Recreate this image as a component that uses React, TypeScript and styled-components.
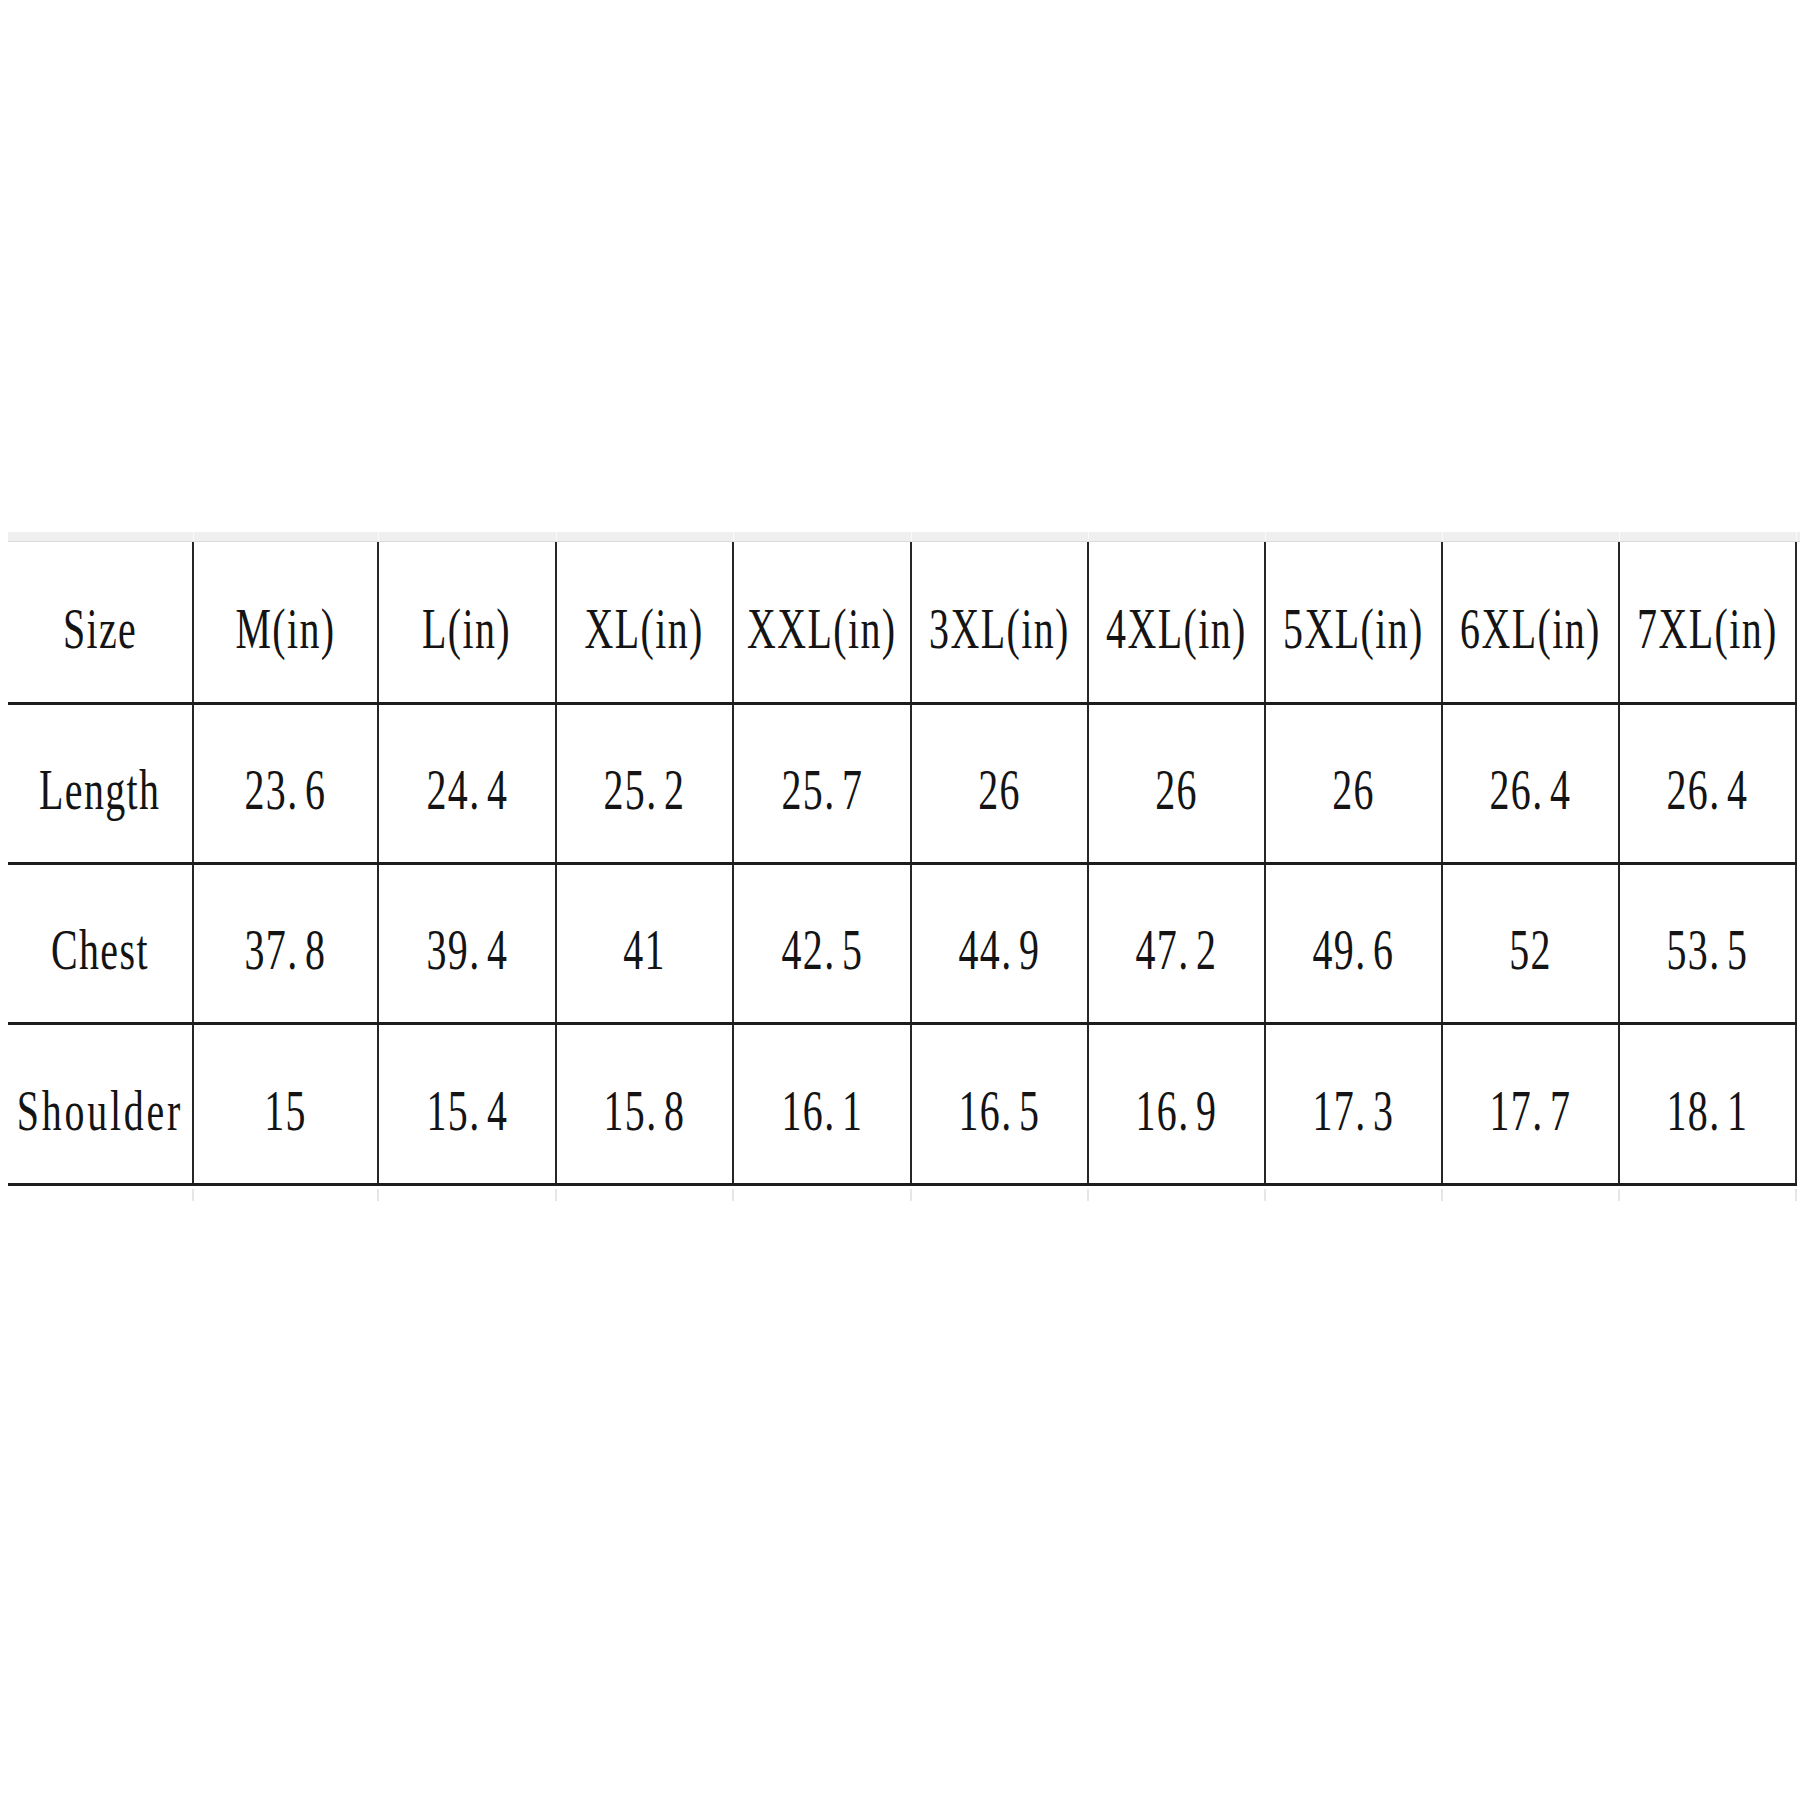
import React from 'react';
import styled, { createGlobalStyle } from 'styled-components';

const GlobalStyle = createGlobalStyle`
  html, body {
    margin: 0;
    padding: 0;
    background: #fff;
  }
  body {
    width: 1800px;
    min-height: 1800px;
    font-family: "Liberation Serif", "Times New Roman", serif;
  }
`;

const columns = [186, 185, 178, 177, 178, 177, 177, 177, 177, 177];
const template = columns.map((w) => `${w}px`).join(' ');

const header = [
  'Size',
  'M(in)',
  'L(in)',
  'XL(in)',
  'XXL(in)',
  '3XL(in)',
  '4XL(in)',
  '5XL(in)',
  '6XL(in)',
  '7XL(in)',
];

const rows: { label: string; values: string[]; height: number }[] = [
  {
    label: 'Length',
    values: ['23.6', '24.4', '25.2', '25.7', '26', '26', '26', '26.4', '26.4'],
    height: 160,
  },
  {
    label: 'Chest',
    values: ['37.8', '39.4', '41', '42.5', '44.9', '47.2', '49.6', '52', '53.5'],
    height: 160,
  },
  {
    label: 'Shoulder',
    values: ['15', '15.4', '15.8', '16.1', '16.5', '16.9', '17.3', '17.7', '18.1'],
    height: 161,
  },
];

const renderNumber = (value: string) => {
  const [whole, frac] = value.split('.');
  if (frac === undefined) return whole;
  return (
    <>
      {whole}
      <Dot>.</Dot>
      {frac}
    </>
  );
};

const SizeChart = () => {
  return (
    <Sheet>
      <ColumnStrip>
        {columns.map((_, i) => (
          <StripCell key={i} />
        ))}
      </ColumnStrip>

      <Grid>
        <Row $height={163}>
          {header.map((h, i) => (
            <Cell key={h} $last={i === columns.length - 1}>
              <Label>{h}</Label>
            </Cell>
          ))}
        </Row>
        {rows.map((row) => (
          <Row key={row.label} $height={row.height}>
            <Cell>
              <Label $wide={row.label === 'Shoulder'}>{row.label}</Label>
            </Cell>
            {row.values.map((v, i) => (
              <Cell key={`${row.label}-${i}`} $last={i === row.values.length - 1}>
                <Label>{renderNumber(v)}</Label>
              </Cell>
            ))}
          </Row>
        ))}
      </Grid>

      <TickStrip>
        {columns.map((_, i) => (
          <Tick key={i} />
        ))}
      </TickStrip>
    </Sheet>
  );
};

export default function App() {
  return (
    <>
      <GlobalStyle />
      <SizeChart />
    </>
  );
}

const Sheet = styled.div`
  display: flex;
  flex-direction: column;
  padding: 532px 0 0 8px;
`;

const ColumnStrip = styled.div`
  display: grid;
  grid-template-columns: ${template} 1fr;
  height: 10px;
  background: #efefef;
  border-bottom: 1px solid #dadada;
  box-sizing: border-box;
`;

const StripCell = styled.div`
  border-right: 1px solid #fafafa;
`;

const Grid = styled.div`
  display: flex;
  flex-direction: column;
`;

const Row = styled.div<{ $height: number }>`
  display: grid;
  grid-template-columns: ${template};
  height: ${(p) => p.$height}px;
  border-bottom: 3px solid #1d1d1d;
  box-sizing: border-box;
  width: 1789px;
`;

const Cell = styled.div<{ $last?: boolean }>`
  display: flex;
  align-items: center;
  justify-content: center;
  padding-top: 12px;
  box-sizing: border-box;
  border-right: 2px solid ${(p) => (p.$last ? '#2a2a2a' : '#262626')};
  overflow: visible;
  white-space: nowrap;
`;

const Label = styled.span<{ $wide?: boolean }>`
  display: inline-block;
  font-family: "Liberation Serif", "Times New Roman", serif;
  font-size: 57px;
  line-height: 1;
  letter-spacing: ${(p) => (p.$wide ? 4 : 2)}px;
  color: #141414;
  transform: scaleX(0.7);
  transform-origin: center;
`;

const Dot = styled.span`
  margin-right: 9px;
`;

const TickStrip = styled.div`
  display: grid;
  grid-template-columns: ${template};
  height: 12px;
  margin-top: 3px;
`;

const Tick = styled.div`
  border-right: 2px solid #e6e6e6;
`;
